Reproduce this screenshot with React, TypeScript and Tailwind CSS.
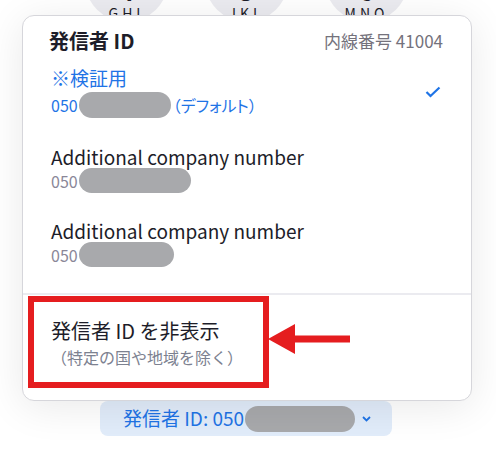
import type { ReactElement } from "react";

// ── Dial keys peeking out behind the popover ───────────────────────────────

const keys = [
	{ digit: "4", letters: "GHI" },
	{ digit: "5", letters: "JKL" },
	{ digit: "6", letters: "MNO" },
];

function Redacted({ width }: { width: string }): ReactElement {
	return <span className={`inline-block h-[26px] rounded-full bg-[#a8a9ac] ${width}`} />;
}

function NumberRow({ title, pill }: { title: string; pill: string }): ReactElement {
	return (
		<div className="flex flex-col">
			<div className="text-[19px] leading-[22px] text-[#1d1d29]">{title}</div>
			<div className="flex h-[25px] items-center text-[16px] text-[#8a8798]">
				<span>050</span>
				<span className={`ml-[1px] inline-block h-[25px] rounded-full bg-[#a8a9ac] ${pill}`} />
			</div>
		</div>
	);
}

export default function App(): ReactElement {
	return (
		<div
			className="relative h-[453px] w-[496px] overflow-hidden bg-white"
			style={{ fontFamily: '"Noto Sans CJK JP", "Noto Sans", sans-serif' }}
		>
			{/* dial keys behind */}
			<div className="absolute top-[-62px] left-[85px] flex gap-[37px]">
				{keys.map((k) => (
					<div
						key={k.digit}
						className="flex h-[84px] w-[83px] flex-col items-center justify-end rounded-full bg-[#ebebf0] pb-[1px]"
					>
						<span className="text-[26px] leading-[30px] font-bold text-[#1d1d29]">{k.digit}</span>
						<span className="text-[14px] leading-[16px] tracking-[4px] text-[#1d1d29]">{k.letters}</span>
					</div>
				))}
			</div>

			{/* caller id popover */}
			<div className="relative mt-[15px] ml-[22px] w-[450px] rounded-[12px] border border-[#d6d6db] bg-white pt-[14px] pb-[12px] shadow-[0_6px_40px_rgba(0,0,0,0.09)]">
				{/* header */}
				<div className="flex items-center justify-between pr-[28px] pl-[26px]">
					<span className="text-[20px] leading-[22px] font-bold text-[#1d1d29]">発信者 ID</span>
					<span className="text-[17px] leading-[22px] text-[#74727c]">内線番号 41004</span>
				</div>

				{/* selected */}
				<div className="mt-[15px] flex items-center justify-between pr-[30px] pl-[28px] text-[#1f74e6]">
					<div className="flex flex-col">
						<div className="text-[19px] leading-[22px]">※検証用</div>
						<div className="mt-[3px] flex h-[26px] items-center text-[16px]">
							<span>050</span>
							<Redacted width="ml-[1px] w-[92px]" />
							<span className="ml-[2px] [font-feature-settings:'palt']">（デフォルト）</span>
						</div>
					</div>
					<svg width="16" height="12" viewBox="0 0 16 12" className="mt-[-2px]">
						<polyline points="1.5,6 5.5,10 14.5,1.5" fill="none" stroke="#1f74e6" strokeWidth="2.2" />
					</svg>
				</div>

				<div className="mt-[28px] flex flex-col gap-[27px] pl-[28px]">
					<NumberRow title="Additional company number" pill="w-[112px]" />
					<NumberRow title="Additional company number" pill="w-[95px]" />
				</div>

				<div className="mt-[26px] h-[2px] bg-[#ebebf0]" />

				{/* hide caller id, highlighted */}
				<div className="relative">
					<div className="mt-[1px] ml-[5px] w-[241px] border-[6px] border-[#e51d1f] pt-[18px] pb-[16px] pl-[17px]">
						<div className="text-[20px] leading-[22px] text-[#1d1d29]">発信者 ID を非表示</div>
						<div className="mt-[6px] text-[16px] leading-[18px] text-[#7c8190]">（特定の国や地域を除く）</div>
					</div>
					<svg width="84" height="34" viewBox="0 0 84 34" className="absolute top-[26px] left-[245px]">
						<polygon points="0,17 27,2 27,32" fill="#e51d1f" />
						<rect x="26" y="13.5" width="56" height="7" fill="#e51d1f" />
					</svg>
				</div>
			</div>

			{/* current caller id button */}
			<div className="ml-[100px] flex h-[35px] w-[292px] items-center rounded-[8px] bg-[#e1ecfa] pl-[23px] text-[19px] text-[#1f74e6]">
				<span>発信者 ID: 050</span>
				<span className="ml-[1px] inline-block h-[26px] w-[110px] rounded-full bg-[#a8a9ac]" />
				<svg width="9" height="6" viewBox="0 0 9 6" className="ml-[7px]">
					<polyline points="1,1 4.5,4.5 8,1" fill="none" stroke="#1f74e6" strokeWidth="1.8" />
				</svg>
			</div>
		</div>
	);
}
